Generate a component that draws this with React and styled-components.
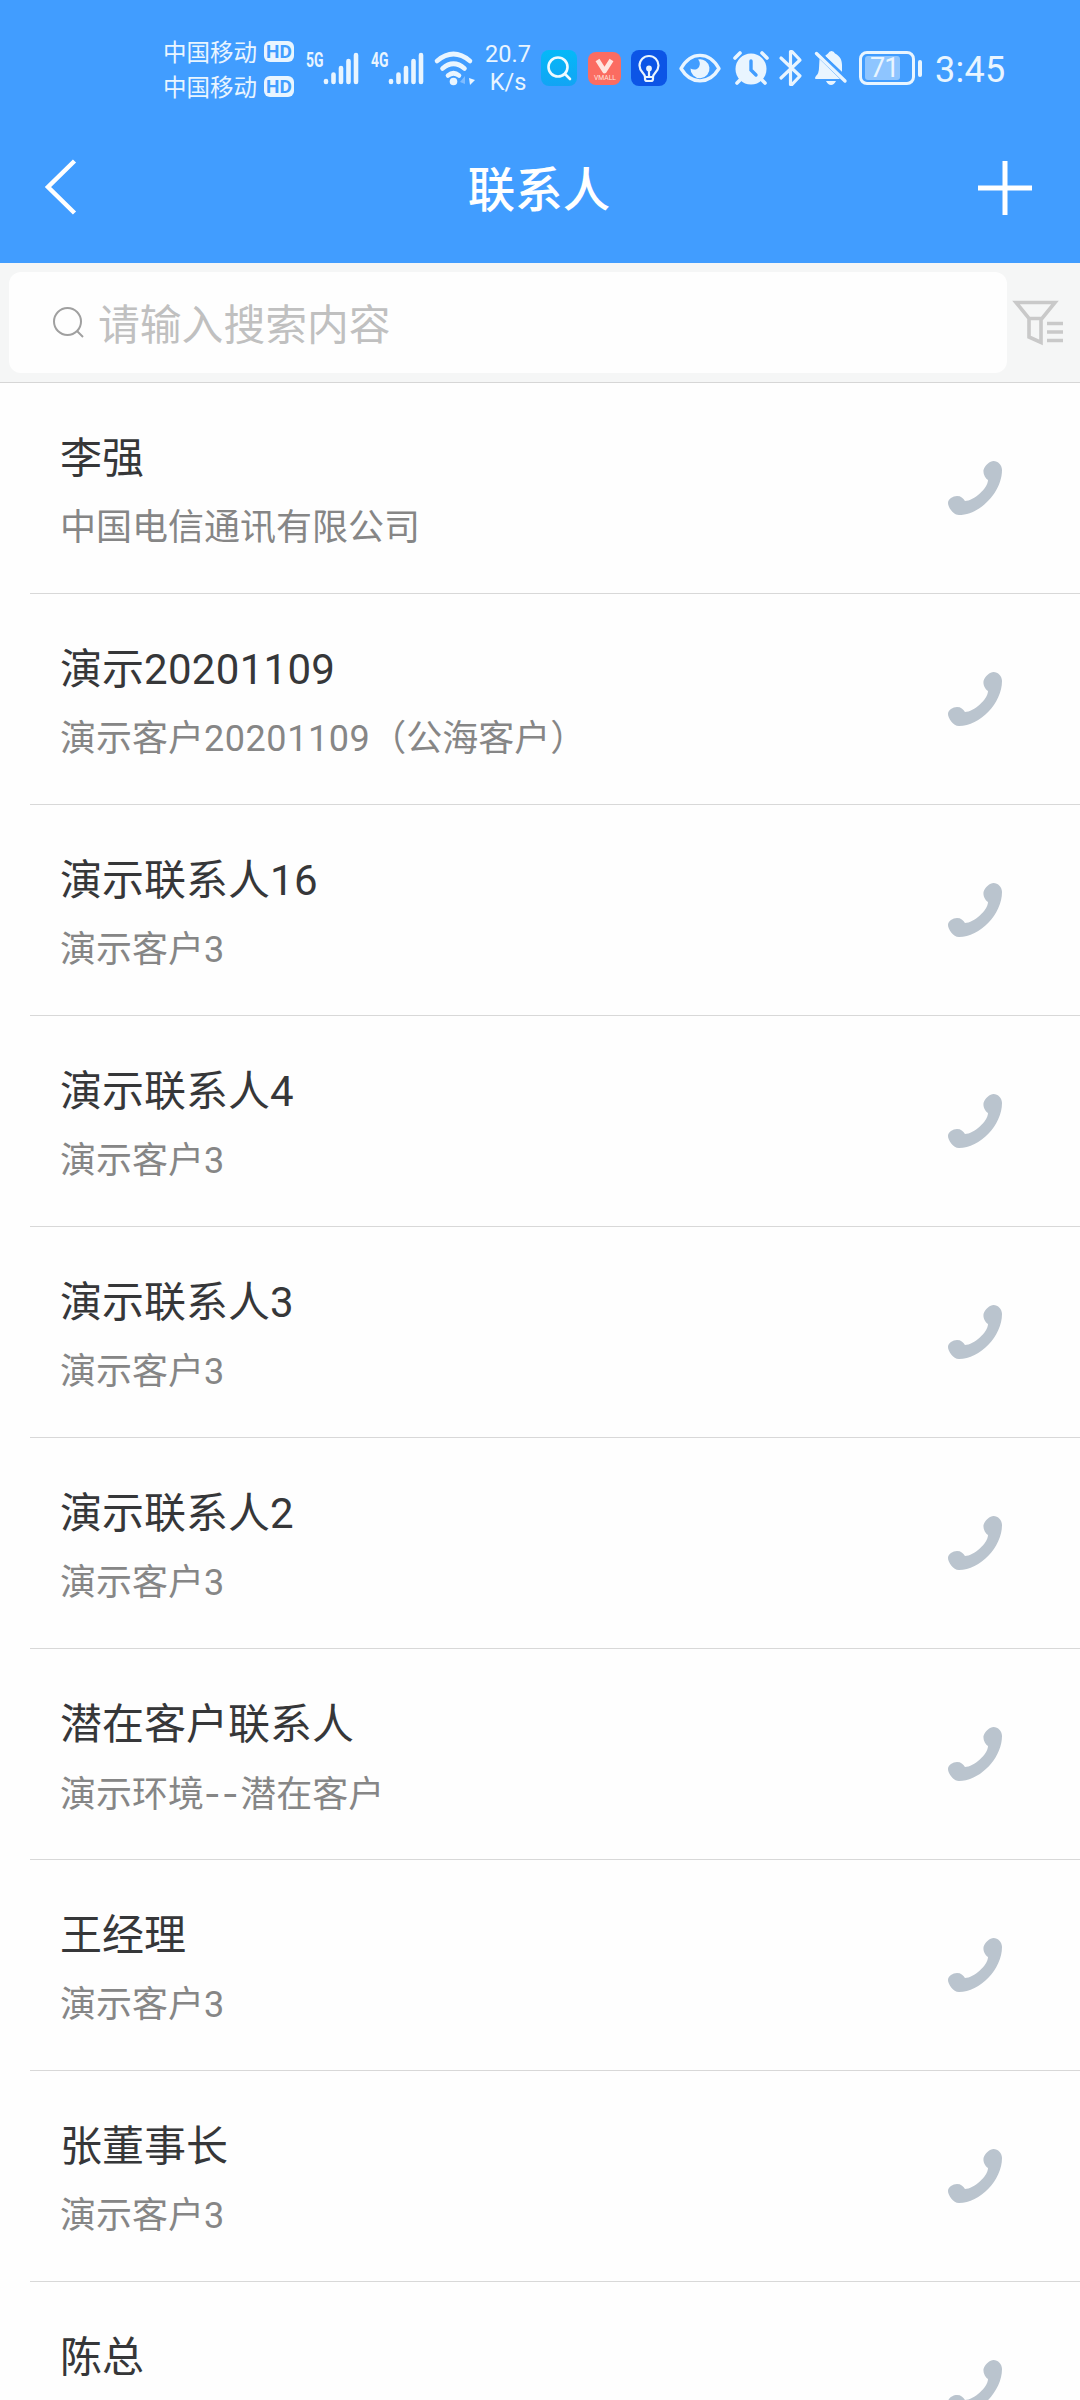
import React from 'react';
import styled, { createGlobalStyle } from 'styled-components';

const contacts = [
    { name: '李强', company: '中国电信通讯有限公司' },
    { name: '演示20201109', company: '演示客户20201109（公海客户）' },
    { name: '演示联系人16', company: '演示客户3' },
    { name: '演示联系人4', company: '演示客户3' },
    { name: '演示联系人3', company: '演示客户3' },
    { name: '演示联系人2', company: '演示客户3' },
    { name: '潜在客户联系人', company: '演示环境--潜在客户' },
    { name: '王经理', company: '演示客户3' },
    { name: '张董事长', company: '演示客户3' },
    { name: '陈总', company: '' },
];

const GlobalStyle = createGlobalStyle`
    * {
        box-sizing: border-box;
    }

    body {
        margin: 0;
        background: #fefefe;
        font-family: Roboto, 'Noto Sans CJK SC', sans-serif;
    }

    svg {
        display: block;
        flex-shrink: 0;
        overflow: visible;
    }
`;

const Screen = styled.div`
    width: 1080px;
    height: 2400px;
    overflow: hidden;
    display: flex;
    flex-direction: column;
    background: #fefefe;
`;

const Header = styled.header`
    height: 263px;
    flex-shrink: 0;
    background: #419dff;
    color: #ffffff;
`;

const StatusBar = styled.div`
    height: 137px;
    display: flex;
    align-items: center;
    padding: 0 0 1px 163px;
    color: #e9f5ff;
`;

const Carriers = styled.div`
    width: 131px;
    margin-right: 12px;
    padding-top: 1px;
`;

const Carrier = styled.div`
    height: 35px;
    display: flex;
    align-items: center;
    justify-content: space-between;
    font: 400 23.5px/35px 'Noto Sans CJK SC', sans-serif;
`;

const HdBadge = styled.span`
    width: 30px;
    height: 21px;
    border-radius: 6px;
    background: #e9f5ff;
    color: #419dff;
    text-align: center;
    font: 700 19px/22px Roboto, sans-serif;
`;

const StatusItem = styled.div`
    width: ${({ $width }) => $width}px;
    margin-right: ${({ $gap }) => $gap || 0}px;
    flex-shrink: 0;
`;

const Speed = styled.div`
    width: 52px;
    margin-right: 7px;
    text-align: center;
    font: 400 23.5px/28px Roboto, sans-serif;
`;

const AppIcon = styled.div`
    width: ${({ $size }) => $size}px;
    height: ${({ $size }) => $size}px;
    margin-right: ${({ $gap }) => $gap}px;
    border-radius: 8px;
    background: ${({ $color }) => $color};
    flex-shrink: 0;
`;

const Battery = styled.div`
    width: 56px;
    height: 34px;
    padding: 2px 3px;
    border: 3px solid #e9f5ff;
    border-radius: 8px;
`;

const BatteryFill = styled.div`
    width: 35px;
    height: 24px;
    padding-left: 5px;
    border-radius: 3px;
    background: #8ec5ff;
    font: 400 27px/24px Roboto, sans-serif;
    letter-spacing: -1px;
`;

const BatteryTip = styled.div`
    width: 4px;
    height: 17px;
    margin: 0 13px 0 3px;
    border-radius: 2px;
    background: #e9f5ff;
`;

const Clock = styled.div`
    font: 400 36px/40px Roboto, sans-serif;
    letter-spacing: 0.3px;
    white-space: nowrap;
    padding-top: 4px;
`;

const TitleBar = styled.div`
    height: 126px;
    display: flex;
    justify-content: space-between;
    padding: 22px 48px 0 44px;
`;

const Title = styled.h1`
    margin: 0;
    padding: 0 0 0 22px;
    font: 500 47.5px/56px 'Noto Sans CJK SC', sans-serif;
`;

const SearchBar = styled.div`
    height: 120px;
    flex-shrink: 0;
    display: flex;
    padding: 9px 0 0 9px;
    background: #f5f6f6;
    border-bottom: 1px solid #d6d6d6;
`;

const SearchBox = styled.div`
    width: 998px;
    height: 101px;
    display: flex;
    align-items: center;
    padding-left: 44px;
    border-radius: 12px;
    background: #fefefe;
`;

const Placeholder = styled.span`
    margin: -2px 0 0 14px;
    color: #c0c0c0;
    font: 400 41.8px/60px 'Noto Sans CJK SC', sans-serif;
`;

const FilterButton = styled.div`
    padding: 27px 0 0 6px;
`;

const Row = styled.div`
    height: 211px;
    flex-shrink: 0;
    display: flex;
    align-items: center;
    justify-content: space-between;
    margin-left: 30px;
    padding: 0 78px 0 30px;
    border-bottom: 1px solid #d8d8d8;
`;

const Info = styled.div`
    padding-top: 12px;
`;

const Name = styled.div`
    height: 68px;
    color: #363739;
    font-size: 42px;
    line-height: 68px;
`;

const Company = styled.div`
    height: 70px;
    color: #868686;
    font-size: 36px;
    line-height: 70px;
`;

const Digits = styled.span`
    letter-spacing: ${({ $spacing }) => $spacing}px;
`;

const Dash = styled.span`
    font-family: Inter, sans-serif;
    letter-spacing: 1.5px;
`;

// latin digits and dashes are set a little wider than the Chinese text
const renderText = (text, spacing) =>
    text.split(/(\d+|--)/).map((part, index) => {
        if (part === '--') return <Dash key={index}>{part}</Dash>;
        if (/^\d+$/.test(part)) return <Digits key={index} $spacing={spacing}>{part}</Digits>;
        return part;
    });

const SignalIcon = ({ label }) => (
    <svg width="53" height="36" viewBox="0 0 53 36">
        <text x="0" y="17" fill="#e9f5ff" fontFamily="Roboto" fontWeight="700" fontSize="21" textLength="17.5" lengthAdjust="spacingAndGlyphs">{label}</text>
        <g stroke="#e9f5ff" strokeWidth="4.6" strokeLinecap="round">
            <path d="M20 31v1M27.5 24.5v7.5M35 18v14M42.5 11v21M50 5v27" />
        </g>
    </svg>
);

const WifiIcon = () => (
    <svg width="42" height="36" viewBox="0 0 42 36" fill="none" stroke="#e9f5ff" strokeWidth="4.6" strokeLinecap="round">
        <path d="M3 11Q19.5-3 36 11M8.5 18.5Q19.5 9 30.5 18.5M14 25.5Q19.5 21 25 25.5" />
        <circle cx="19.5" cy="31.5" r="3.8" fill="#e9f5ff" stroke="none" />
        <path d="M26 32l5-6v8z" fill="#7fbcff" stroke="none" />
        <path d="M35 28l6 2-5 5z" fill="#e9f5ff" stroke="none" />
    </svg>
);

const EyeIcon = () => (
    <svg width="42" height="36" viewBox="0 0 42 36">
        <path d="M2 18.500C12 1 30 1 40 18.500C30 35 12 35 2 18.500Z" fill="none" stroke="#e9f5ff" strokeWidth="3.4" strokeLinejoin="round" />
        <path d="M19 9.500a9.500 9.500 0 1 1-7.500 9c3 2 7 1.200 8.500-1.500c1.500-3 1-5.500-1-7.500z" fill="#e9f5ff" />
    </svg>
);

const AlarmIcon = () => (
    <svg width="36" height="36" viewBox="0 0 36 36" stroke="#e9f5ff" strokeWidth="3.6" strokeLinecap="round">
        <path d="M2 8l5-5M34 8l-5-5M8 29l-4 4M28 29l4 4" />
        <circle cx="18" cy="19" r="15.5" fill="#e9f5ff" stroke="none" />
        <path d="M18 11v9l5 5" fill="none" stroke="#419dff" strokeWidth="3.4" />
    </svg>
);

const BluetoothIcon = () => (
    <svg width="24" height="38" viewBox="0 0 24 38" fill="none" stroke="#e9f5ff" strokeWidth="3.2" strokeLinecap="round" strokeLinejoin="round">
        <path d="M2 9l19 18-8 8.500h-1.500V2.500H13l8 8.500L2 29" />
    </svg>
);

const MutedBellIcon = () => (
    <svg width="33" height="36" viewBox="0 0 33 36" fill="#e9f5ff">
        <path d="M11 6Q13 4 14 3.500Q15 1 17.500 1Q20 1 21 3.500C26 6 28 10 28 15V22z" />
        <path d="M5.500 9L26 29H2Q0 29 2 26Q5 23 5 18z" />
        <path d="M12 31h10q-2 4-5 4t-5-4z" />
        <path d="M5 2L33 29" stroke="#419dff" strokeWidth="3" />
        <path d="M2.500 3.500L31 31" stroke="#e9f5ff" strokeWidth="3.4" strokeLinecap="round" />
    </svg>
);

const PhoneIcon = () => (
    <svg width="54" height="54" viewBox="0 0 54 54">
        <path d="M35.5 9C37 4 42 0 45.5 0C50 0 54 4 54 9C54 31 32 54 11 54C5 54 0 46 0 42C0 38 5 35 9 35C13 35 15 37 17 40C26 40 40 27 40 19C37 17 35 13 35.500 9Z" fill="#bac4ce" />
    </svg>
);

const FilterIcon = () => (
    <svg width="52" height="46" viewBox="0 0 52 46" fill="none" stroke="#c9c9c9" strokeWidth="3.6">
        <path d="M3 3.500H42L29 19.500H16zM16 19.500V38L28 43.500V19.500M34 24.500H50M34 33H50M34 41.500H50" />
    </svg>
);

const App = () => {
    return (
        <Screen>
            <GlobalStyle />
            <Header>
                <StatusBar>
                    <Carriers>
                        <Carrier>中国移动<HdBadge>HD</HdBadge></Carrier>
                        <Carrier>中国移动<HdBadge>HD</HdBadge></Carrier>
                    </Carriers>
                    <StatusItem $width={53} $gap={12}><SignalIcon label="5G" /></StatusItem>
                    <StatusItem $width={53} $gap={10}><SignalIcon label="4G" /></StatusItem>
                    <StatusItem $width={42} $gap={6}><WifiIcon /></StatusItem>
                    <Speed>20.7<br />K/s</Speed>
                    <AppIcon $size={36} $gap={11} $color="linear-gradient(#04b9f8, #12a4f4)">
                        <svg width="36" height="36" viewBox="0 0 36 36" fill="none" stroke="#effaff" strokeWidth="2.6" strokeLinecap="round">
                            <circle cx="17" cy="17" r="9.5" />
                            <path d="M24 24l5 5" />
                        </svg>
                    </AppIcon>
                    <AppIcon $size={33} $gap={10} $color="#fb6c61">
                        <svg width="33" height="33" viewBox="0 0 33 33">
                            <path d="M9.5 8l7 11 7-11" fill="none" stroke="#ffe5df" strokeWidth="4.6" strokeLinejoin="round" />
                            <text x="6" y="28" fill="#ffe5df" fontFamily="Roboto" fontSize="6.5" textLength="22" lengthAdjust="spacingAndGlyphs">VMALL</text>
                        </svg>
                    </AppIcon>
                    <AppIcon $size={36} $gap={12} $color="#0c55e6">
                        <svg width="36" height="36" viewBox="0 0 36 36" fill="none" stroke="#e9f5ff" strokeWidth="2.2" strokeLinecap="round">
                            <path d="M14 27c0-4-5.500-5-5.500-11.500a9.500 9.500 0 0 1 19 0C27.500 22 22 23 22 27zM14 27v2q0 2 2 2h4q2 0 2-2v-2M18 20v6" />
                            <circle cx="18" cy="18.5" r="1.8" fill="#e9f5ff" />
                        </svg>
                    </AppIcon>
                    <StatusItem $width={42} $gap={12}><EyeIcon /></StatusItem>
                    <StatusItem $width={36} $gap={10}><AlarmIcon /></StatusItem>
                    <StatusItem $width={24} $gap={11}><BluetoothIcon /></StatusItem>
                    <StatusItem $width={33} $gap={12}><MutedBellIcon /></StatusItem>
                    <Battery>
                        <BatteryFill>71</BatteryFill>
                    </Battery>
                    <BatteryTip />
                    <Clock>3:45</Clock>
                </StatusBar>
                <TitleBar>
                    <svg width="34" height="56" viewBox="0 0 34 56">
                        <path d="M30.5 2L4 28L30.5 54" fill="none" stroke="#ffffff" strokeWidth="4.5" />
                    </svg>
                    <Title>联系人</Title>
                    <svg width="54" height="56" viewBox="0 0 54 56">
                        <path d="M27 2v54M0 29h54" stroke="#ffffff" strokeWidth="5" />
                    </svg>
                </TitleBar>
            </Header>
            <SearchBar>
                <SearchBox>
                    <svg width="31" height="31" viewBox="0 0 31 31" fill="none" stroke="#a0a0a0" strokeWidth="2">
                        <circle cx="14.5" cy="14.5" r="13.5" />
                        <path d="M24 24l6 6" />
                    </svg>
                    <Placeholder>请输入搜索内容</Placeholder>
                </SearchBox>
                <FilterButton>
                    <FilterIcon />
                </FilterButton>
            </SearchBar>
            {contacts.map(({ name, company }) => (
                <Row key={name}>
                    <Info>
                        <Name>{renderText(name, 0.3)}</Name>
                        <Company>{renderText(company, 0.55)}</Company>
                    </Info>
                    <PhoneIcon />
                </Row>
            ))}
        </Screen>
    );
};

export default App;
